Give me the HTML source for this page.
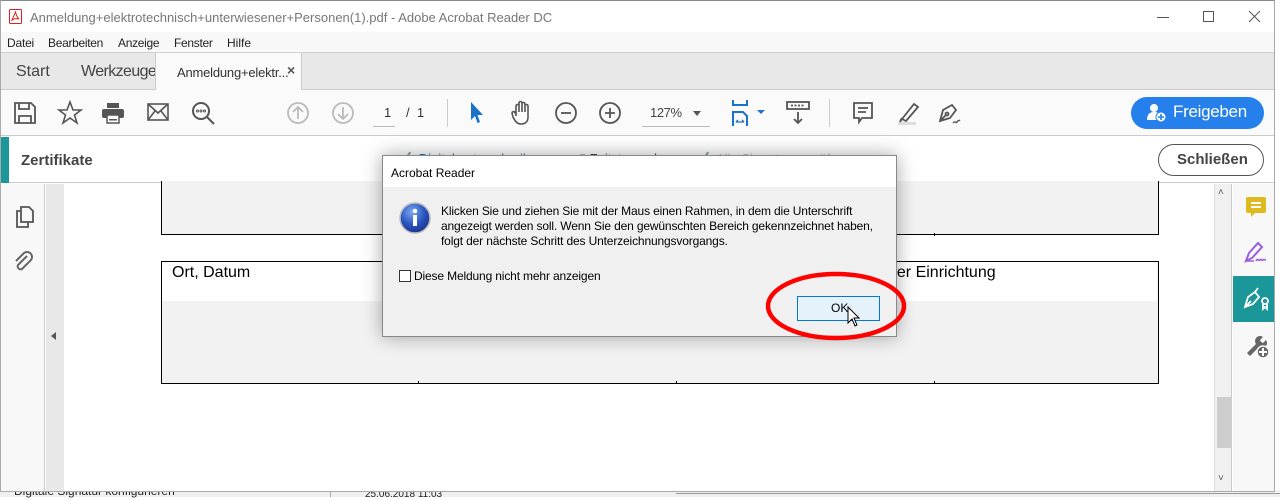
<!DOCTYPE html>
<html><head><meta charset="utf-8"><style>
*{margin:0;padding:0;box-sizing:border-box}
body{width:1280px;height:497px;overflow:hidden;position:relative;background:#fff;font-family:"Liberation Sans",sans-serif;color:#333}
.a{position:absolute;white-space:nowrap}
svg{position:absolute;overflow:visible}
</style></head><body>
<div class="a" style="left:0;top:490px;width:1280px;height:7px;background:#f0f0f0"></div>
<div class="a" style="left:14px;top:484px;font-size:12px;color:#222">Digitale Signatur konfigurieren</div>
<div class="a" style="left:330px;top:490px;width:1px;height:7px;background:#aaa"></div>
<div class="a" style="left:365px;top:489px;font-size:10px;color:#222">25.06.2018 11:03</div>
<div class="a" style="left:676px;top:493px;width:604px;height:1px;background:#999"></div>

<div class="a" style="left:0;top:0;width:1275px;height:492px;background:#fff;border:1px solid #aaa;border-top:1px solid #888;overflow:hidden">
 <svg style="left:8px;top:8px" width="14" height="16"><rect x="0.5" y="0.5" width="12" height="14" rx="1" fill="#fff" stroke="#e02020"/><path d="M3 11 C5 7 6 4 6.5 3 C7 5 8 8 10 10 C7 9 5 10 3 11Z" fill="none" stroke="#e02020" stroke-width="1"/></svg>
 <div class="a" style="left:29px;top:9px;font-size:13px;color:#777">Anmeldung+elektrotechnisch+unterwiesener+Personen(1).pdf - Adobe Acrobat Reader DC</div>
 <div class="a" style="left:1156px;top:16px;width:12px;height:1px;background:#555"></div>
 <div class="a" style="left:1202px;top:10px;width:11px;height:11px;border:1px solid #555"></div>
 <svg style="left:1248px;top:10px" width="12" height="12"><path d="M0 0L11 11M11 0L0 11" stroke="#555"/></svg>
 <div class="a" style="left:0;top:31px;width:1280px;height:21px;background:#f8f8f8;border-bottom:1px solid #d0d0d0"></div>
 <div class="a" style="left:6px;top:35px;font-size:12px;color:#222;letter-spacing:-0.2px">Datei</div>
 <div class="a" style="left:47px;top:35px;font-size:12px;color:#222;letter-spacing:-0.3px">Bearbeiten</div>
 <div class="a" style="left:117px;top:35px;font-size:12px;color:#222;letter-spacing:-0.3px">Anzeige</div>
 <div class="a" style="left:173px;top:35px;font-size:12px;color:#222;letter-spacing:-0.3px">Fenster</div>
 <div class="a" style="left:226px;top:35px;font-size:12px;color:#222">Hilfe</div>
 <div class="a" style="left:0;top:52px;width:1280px;height:37px;background:#e8e8e8;border-bottom:1px solid #ccc"></div>
 <div class="a" style="left:15px;top:62px;font-size:16px;color:#444">Start</div>
 <div class="a" style="left:80px;top:62px;font-size:16px;color:#444;letter-spacing:-0.6px">Werkzeuge</div>
 <div class="a" style="left:154px;top:52px;width:147px;height:38px;background:#fafafa;border-left:1px solid #ccc;border-right:1px solid #ccc"></div>
 <div class="a" style="left:176px;top:64px;font-size:13px;color:#333;letter-spacing:-0.2px">Anmeldung+elektr...</div>
 <div class="a" style="left:286px;top:61px;font-size:14px;font-weight:bold;color:#555">×</div>
 <div class="a" style="left:0;top:89px;width:1280px;height:46px;background:#fafafa;border-bottom:1px solid #ccc"></div>
 <svg style="left:13px;top:101px" width="22" height="22" fill="none" stroke="#555" stroke-width="1.8"><path d="M1 1H17L21 5V21H1Z"/><path d="M5 1V7H15V1M5 21V14H17V21"/></svg>
 <svg style="left:57px;top:100px" width="24" height="24" fill="none" stroke="#555" stroke-width="1.6"><path d="M12 1L15 9H23L16.5 14L19 22L12 17L5 22L7.5 14L1 9H9Z"/></svg>
 <svg style="left:101px;top:102px" width="22" height="20" fill="#555"><rect x="5" y="0" width="12" height="5"/><rect x="0" y="6" width="22" height="9" rx="2"/><rect x="5" y="12" width="12" height="8" fill="#fff" stroke="#555" stroke-width="1.5"/><rect x="7" y="16" width="8" height="1.5"/></svg>
 <svg style="left:146px;top:102px" width="22" height="18" fill="none" stroke="#555" stroke-width="1.6"><rect x="1" y="1" width="20" height="16"/><path d="M1 1L11 10L21 1M1 17L8 8M21 17L14 8"/></svg>
 <svg style="left:190px;top:100px" width="26" height="26" fill="none" stroke="#555" stroke-width="2"><circle cx="10" cy="10" r="8"/><path d="M16 16L23 23"/><circle cx="6.5" cy="10" r=".5"/><circle cx="10" cy="10" r=".5"/><circle cx="13.5" cy="10" r=".5"/></svg>
 <svg style="left:286px;top:101px" width="22" height="22" fill="none" stroke="#bbb" stroke-width="1.8"><circle cx="11" cy="11" r="10"/><path d="M11 17V5M6 10L11 5L16 10"/></svg>
 <svg style="left:331px;top:101px" width="22" height="22" fill="none" stroke="#bbb" stroke-width="1.8"><circle cx="11" cy="11" r="10"/><path d="M11 5V17M6 12L11 17L16 12"/></svg>
 <div class="a" style="left:383px;top:104px;font-size:13px;color:#333">1</div>
 <div class="a" style="left:372px;top:125px;width:22px;height:1px;background:#bbb"></div>
 <div class="a" style="left:405px;top:104px;font-size:13px;color:#333">/&nbsp; 1</div>
 <div class="a" style="left:446px;top:98px;width:1px;height:28px;background:#ccc"></div>
 <svg style="left:468px;top:100px" width="16" height="24"><path d="M2 1L14 14H8.5L11 21L8.5 22L6 15L2 19Z" fill="#1a73c8"/></svg>
 <svg style="left:509px;top:99px" width="24" height="26" fill="none" stroke="#555" stroke-width="1.6"><path d="M6 16V6a1.5 1.5 0 013 0V12M9 12V3a1.5 1.5 0 013 0V12M12 12V4a1.5 1.5 0 013 0V12M15 12V6a1.5 1.5 0 013 0V17C18 22 15 24 11 24C7 24 5 21 3 17L2 13a1.5 1.5 0 012.5-1L6 14"/></svg>
 <svg style="left:554px;top:101px" width="22" height="22" fill="none" stroke="#555" stroke-width="1.8"><circle cx="11" cy="11" r="10"/><path d="M6 11H16"/></svg>
 <svg style="left:598px;top:101px" width="22" height="22" fill="none" stroke="#555" stroke-width="1.8"><circle cx="11" cy="11" r="10"/><path d="M6 11H16M11 6V16"/></svg>
 <div class="a" style="left:649px;top:104px;font-size:13px;color:#444;letter-spacing:-0.4px">127%</div>
 <div class="a" style="left:692px;top:110px;border:4px solid transparent;border-top:5px solid #555"></div>
 <div class="a" style="left:641px;top:125px;width:68px;height:1px;background:#bbb"></div>
 <svg style="left:731px;top:99px" width="34" height="26" fill="none" stroke="#1a73c8" stroke-width="2"><path d="M1 0V5H15V0M1 26V12H11L15 16V26"/><path d="M4 22H12M4 22L6 20M12 22L10 20" stroke-width="1.3"/><path d="M25 10H33L29 14Z" fill="#1a73c8" stroke="none"/></svg>
 <svg style="left:785px;top:100px" width="24" height="24" fill="none" stroke="#555" stroke-width="1.8"><rect x="1" y="1" width="22" height="7"/><path d="M5 4.5H19" stroke-dasharray="2 1.5"/><path d="M12 11V22M8 18L12 22L16 18"/></svg>
 <div class="a" style="left:828px;top:98px;width:1px;height:28px;background:#ccc"></div>
 <svg style="left:852px;top:101px" width="20" height="22" fill="none" stroke="#555" stroke-width="1.8"><path d="M1 1H19V16H9L6 20V16H1Z"/><path d="M5 6H15M5 10H13"/></svg>
 <svg style="left:895px;top:100px" width="24" height="24"><path d="M6 18L18 3L22 6L10 20Z" fill="none" stroke="#555" stroke-width="1.8"/><rect x="2" y="21" width="18" height="3" fill="#ddd"/><path d="M4 21L6 17" stroke="#555" stroke-width="2"/></svg>
 <svg style="left:937px;top:100px" width="26" height="24" fill="none" stroke="#555" stroke-width="1.8"><path d="M2 20L5 9L14 4L18 9L12 17Z"/><path d="M2 20L8 14"/><circle cx="9" cy="13" r="1.5"/><path d="M15 22c2-3 3 1 4-1s2-1 3-2" stroke-width="1.4"/></svg>
 <div class="a" style="left:1130px;top:96px;width:133px;height:32px;border-radius:16px;background:#2680eb"></div>
 <svg style="left:1145px;top:102px" width="22" height="20" fill="#fff"><circle cx="8" cy="5" r="4"/><path d="M1 17C1 11 4 9 8 9S13 10 14 12V17Z"/><circle cx="15" cy="14" r="5" stroke="#2680eb" stroke-width="1"/><path d="M15 11V17M12 14H18" stroke="#2680eb" stroke-width="1.6"/></svg>
 <div class="a" style="left:1172px;top:101px;font-size:17px;color:#fff;letter-spacing:-0.3px">Freigeben</div>
 <div class="a" style="left:0;top:136px;width:1280px;height:46px;background:#fff;border-bottom:1px solid #ccc"></div>
 <div class="a" style="left:0;top:136px;width:8px;height:46px;background:#1b9699"></div>
 <div class="a" style="left:20px;top:151px;font-size:15px;font-weight:bold;color:#444">Zertifikate</div>
 <div class="a" style="left:398px;top:150px;font-size:13px;color:#1a73c8">✍ Digital unterschreiben</div>
 <div class="a" style="left:578px;top:150px;font-size:13px;color:#444">▯ Zeitstempel</div>
 <div class="a" style="left:696px;top:150px;font-size:13px;color:#bbb">✍ Alle Signaturen prüfen</div>
 <div class="a" style="left:1157px;top:143px;width:106px;height:32px;border:1.5px solid #555;border-radius:16px;background:#fff"></div>
 <div class="a" style="left:1176px;top:150px;font-size:15px;font-weight:bold;color:#444">Schließen</div>
 <div class="a" style="left:0;top:183px;width:44px;height:310px;background:#f8f8f8;border-right:1px solid #ccc"></div>
 <svg style="left:14px;top:205px" width="20" height="22" fill="none" stroke="#555" stroke-width="1.8"><path d="M6 1H14L18 5V16H6Z"/><path d="M6 5H2V21H13V16"/></svg>
 <svg style="left:12px;top:250px" width="22" height="24" fill="none" stroke="#666" stroke-width="2"><path d="M14 5L5 14a3 3 0 004 4L18 9a5 5 0 00-7-7L3 10"/></svg>
 <div class="a" style="left:45px;top:183px;width:18px;height:310px;background:#e8e8e8"></div>
 <div class="a" style="left:50px;top:331px;border:4px solid transparent;border-right:5px solid #555;border-left:0"></div>
 <div class="a" style="left:160px;top:180px;width:998px;height:54px;background:#f2f2f2;border:1.5px solid #000;border-top:0"></div>
 <div class="a" style="left:160px;top:260px;width:998px;height:123px;background:#f2f2f2;border:1.5px solid #000"></div>
 <div class="a" style="left:161px;top:261px;width:995px;height:39px;background:#fff"></div>
 <div class="a" style="left:171px;top:263px;font-size:16px;color:#000">Ort, Datum</div>
 <div class="a" style="left:887px;top:263px;font-size:16px;color:#000">der Einrichtung</div>
 <div class="a" style="left:933px;top:232px;width:1px;height:3px;background:#000"></div>
 <div class="a" style="left:933px;top:380px;width:1px;height:3px;background:#000"></div>
 <div class="a" style="left:417px;top:380px;width:1px;height:3px;background:#000"></div>
 <div class="a" style="left:675px;top:380px;width:1px;height:3px;background:#000"></div>
 <div class="a" style="left:1213px;top:183px;width:18px;height:310px;background:#f0f0f0;border-left:1px solid #ddd;border-right:1px solid #ccc"></div>
 <div class="a" style="left:1216px;top:396px;width:14px;height:51px;background:#cdcdcd"></div>
 <div class="a" style="left:1217px;top:186px;font-size:10px;color:#555">˄</div>
 <div class="a" style="left:1217px;top:472px;font-size:10px;color:#555">˅</div>
 <div class="a" style="left:1232px;top:183px;width:48px;height:310px;background:#f8f8f8"></div>
 <svg style="left:1244px;top:196px" width="22" height="22"><path d="M1 2a2 2 0 012-2H19a2 2 0 012 2V14a2 2 0 01-2 2H10L6 20V16H3a2 2 0 01-2-2Z" fill="#e0b920"/><path d="M6 6H16M6 10H16" stroke="#fff" stroke-width="2"/></svg>
 <svg style="left:1243px;top:240px" width="26" height="24" fill="none" stroke="#9a5fe0" stroke-width="2"><path d="M2 20L5 12L14 2L18 6L8 17Z"/><path d="M2 20H10M12 20c2-4 3 1 4-1s2 1 3 0 2 0 3 0" stroke-width="1.6"/></svg>
 <div class="a" style="left:1232px;top:275px;width:46px;height:46px;background:#1b9699"></div>
 <svg style="left:1242px;top:286px" width="28" height="24" fill="none" stroke="#fff" stroke-width="1.8"><path d="M2 20L5 10L12 5L16 10L10 17Z"/><path d="M2 20L8 14M12 5L15 1"/><circle cx="22" cy="14" r="3"/><path d="M20 17V22L22 20L24 22V17"/></svg>
 <svg style="left:1243px;top:334px" width="26" height="24" fill="#666"><path d="M3 18L12 9A5 5 0 0119 2L16 5L17 7L19 8L22 5A5 5 0 0115 12L6 21Z"/><circle cx="19" cy="17" r="6" fill="#666" stroke="#f8f8f8" stroke-width="1.5"/><path d="M19 13V21M15 17H23" stroke="#fff" stroke-width="2"/></svg>
</div>

<div class="a" style="left:382px;top:155px;width:515px;height:182px;background:#f0f0f0;border:1px solid #888;box-shadow:0 0 18px rgba(0,0,0,.35);white-space:normal">
 <div class="a" style="left:0;top:0;width:513px;height:31px;background:#fff"></div>
 <div class="a" style="left:8px;top:10px;font-size:12px;color:#000">Acrobat Reader</div>
 <svg style="left:16px;top:46px" width="32" height="32"><defs><radialGradient id="g" cx="40%" cy="30%" r="70%"><stop offset="0" stop-color="#7aa8f0"/><stop offset=".6" stop-color="#2a55c0"/><stop offset="1" stop-color="#1a3590"/></radialGradient></defs><circle cx="16" cy="16" r="15" fill="url(#g)" stroke="#bbb" stroke-width="1.5"/><circle cx="16" cy="9" r="2.3" fill="#fff"/><rect x="14" y="13" width="4" height="11" fill="#fff"/></svg>
 <div class="a" style="left:58px;top:48px;width:450px;font-size:12px;line-height:15px;color:#000;white-space:normal;letter-spacing:-0.15px">Klicken Sie und ziehen Sie mit der Maus einen Rahmen, in dem die Unterschrift angezeigt werden soll. Wenn Sie den gewünschten Bereich gekennzeichnet haben, folgt der nächste Schritt des Unterzeichnungsvorgangs.</div>
 <div class="a" style="left:16px;top:114px;width:12px;height:12px;border:1px solid #333;background:#fff"></div>
 <div class="a" style="left:31px;top:113px;font-size:12px;color:#000;letter-spacing:-0.15px">Diese Meldung nicht mehr anzeigen</div>
 <div class="a" style="left:414px;top:140px;width:83px;height:25px;background:#e5f1fb;border:1px solid #0078d7"></div>
 <div class="a" style="left:448px;top:145px;font-size:12px;color:#000">OK</div>
 <svg style="left:464px;top:150px" width="14" height="22"><path d="M1 1V17L5 13L8 20L10 19L7 12H12Z" fill="#fff" stroke="#000" stroke-width="1"/></svg>
</div>
<svg style="left:0;top:0" width="1280" height="497"><ellipse cx="836" cy="306" rx="68" ry="32" fill="none" stroke="#ff0000" stroke-width="4.5"/></svg>
</body></html>
